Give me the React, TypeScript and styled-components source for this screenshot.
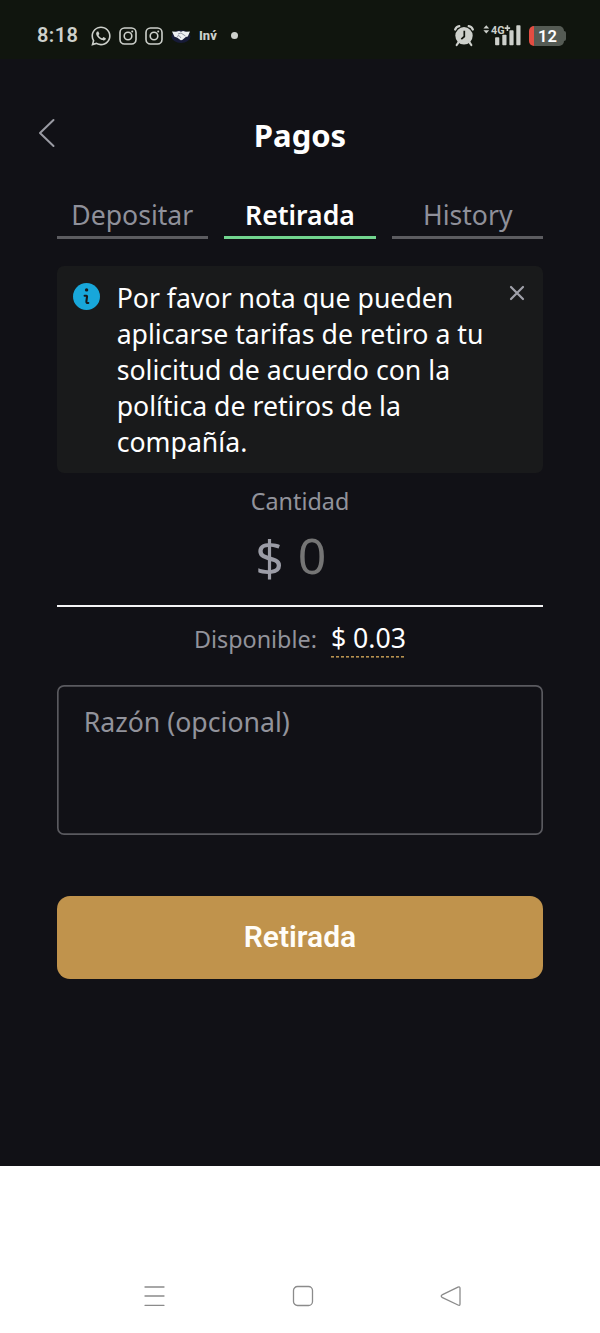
import React from "react";
import styled, { createGlobalStyle } from "styled-components";
import { FaWhatsapp } from "react-icons/fa";

const GlobalStyle = createGlobalStyle`
  * { box-sizing: border-box; }
  body { margin: 0; background: #fff; font-family: "Noto Sans", sans-serif; }
  button, textarea, input { font: inherit; border: 0; margin: 0; padding: 0; background: none; }
  svg { display: block; flex: none; }
`;

const Phone = styled.div`
  width: 600px;
  height: 1333px;
  display: flex;
  flex-direction: column;
  background: #fff;
  overflow: hidden;
`;

const StatusBar = styled.header`
  height: 59px;
  flex: none;
  display: flex;
  align-items: flex-start;
  justify-content: space-between;
  padding: 22px 34px 0 37px;
  background: #10150e;
  color: #cdd0cb;
  font-family: Roboto, sans-serif;
`;

const StatusGroup = styled.div<{ $gap: number }>`
  display: flex;
  align-items: center;
  gap: ${(p) => p.$gap}px;
  height: 27px;
`;

const Clock = styled.span`
  width: 46px;
  font-size: 20px;
  font-weight: 600;
  line-height: 25px;
  margin-top: -1px;
  letter-spacing: 0.4px;
  white-space: nowrap;
`;

const IconSlot = styled.span`
  display: flex;
  justify-content: center;
  width: 20px;
`;

const AppLabel = styled.span`
  font-size: 13px;
  font-weight: 800;
  line-height: 20px;
  width: 20px;
`;

const Dot = styled.span`
  width: 7px;
  height: 7px;
  margin-left: 4px;
  border-radius: 50%;
  background: #cdd0cb;
`;

const Battery = styled.div`
  display: flex;
  align-items: center;
`;

const BatteryBody = styled.div`
  width: 35px;
  height: 20px;
  border-radius: 5px;
  background: linear-gradient(90deg, #e24d42 0 5px, #555b54 5px);
  color: #fff;
  font-size: 16.5px;
  font-weight: 600;
  line-height: 22px;
  text-align: center;
  padding-left: 2px;
`;

const BatteryTip = styled.span`
  width: 2px;
  height: 10px;
  border-radius: 0 2px 2px 0;
  background: #555b54;
`;

const Screen = styled.main`
  height: 1107px;
  flex: none;
  display: flex;
  flex-direction: column;
  padding: 54px 56.67px 0;
  background: #111116;
`;

const TitleRow = styled.div`
  display: grid;
  grid-template-columns: 40px 1fr 40px;
  height: 84px;
  margin: 0 -18.67px;
`;

const BackButton = styled.button`
  align-self: start;
  padding-top: 5px;
  color: #9a9ba3;
`;

const Title = styled.h1`
  margin: 0;
  padding-top: 2px;
  text-align: center;
  color: #fff;
  font-size: 31px;
  font-weight: 700;
  line-height: 40px;
`;

const Tabs = styled.nav`
  display: grid;
  grid-template-columns: repeat(3, 1fr);
  gap: 16.5px;
  height: 42px;
  margin-bottom: 27px;
`;

const Tab = styled.button<{ $active?: boolean }>`
  && { padding-bottom: 4px; }
  border-bottom: 3px solid ${(p) => (p.$active ? "#72d58f" : "#5c5c60")};
  color: ${(p) => (p.$active ? "#fff" : "#8f909a")};
  font-size: 26.6px;
  font-weight: ${(p) => (p.$active ? 600 : 400)};
  line-height: 34px;
  text-align: center;
`;

const Notice = styled.section`
  display: flex;
  height: 207px;
  padding: 14px 17px 0 16.3px;
  border-radius: 7px;
  background: #191a1b;
`;

const NoticeIcon = styled.div`
  padding-top: 3px;
`;

const NoticeText = styled.p`
  flex: 1;
  margin: 0 0 0 16.7px;
  color: #fff;
  font-size: 26.67px;
  line-height: 36px;
`;

const CloseButton = styled.button`
  align-self: flex-start;
  padding-top: 5px;
  color: #a0a1aa;
`;

const AmountLabel = styled.label`
  margin-top: 12px;
  color: #92939b;
  font-size: 23.33px;
  line-height: 32px;
  text-align: center;
`;

const AmountRow = styled.div`
  display: flex;
  gap: 14px;
  height: 90px;
  padding: 1px 0 0 198.5px;
  border-bottom: 2px solid #f4f4f5;
  font-size: 50px;
  line-height: 74px;
`;

const Currency = styled.span`
  padding-top: 2px;
  color: #9b9ca6;
`;

const AmountValue = styled.span`
  color: #757575;
`;

const Available = styled.div`
  display: flex;
  justify-content: center;
  gap: 14px;
  height: 78px;
  padding-top: 13px;
  color: #92939b;
  font-size: 23.33px;
  line-height: 38px;
`;

const AvailableValue = styled.span`
  align-self: flex-start;
  height: 38px;
  background: repeating-linear-gradient(90deg, #b8924f 0 3px, transparent 3px 5px) 0 100% / 100% 1.6px no-repeat;
  color: #fff;
  font-size: 26.67px;
  line-height: 36px;
`;

const Reason = styled.textarea`
  && {
    display: block;
    width: 100%;
    height: 150px;
    padding: 18px 27px;
    border-radius: 7px;
  }
  box-shadow: inset 0 0 0 1.67px #5a5a5f;
  resize: none;
  outline: none;
  color: #fff;
  font-size: 26.67px;
  line-height: 37px;
  &::placeholder { color: #92939b; opacity: 1; }
`;

const Submit = styled.button`
  && {
    height: 83px;
    margin-top: 61.4px;
    padding-bottom: 2px;
    background: #c0934c;
    font: 600 30px/80px Roboto, sans-serif;
  }
  border-radius: 13px;
  color: #fffdf8;
`;

const NavBar = styled.footer`
  display: flex;
  justify-content: space-between;
  padding: 119px 138px 0 143px;
`;

const Instagram = () => (
  <svg width="18" height="18" viewBox="0 0 18 18" fill="none" stroke="currentColor" strokeWidth="1.6">
    <rect x="1" y="1" width="16" height="16" rx="4.5" />
    <circle cx="9" cy="9" r="3.8" />
    <circle cx="13.2" cy="4.6" r="1" fill="currentColor" stroke="none" />
  </svg>
);

const Handshake = () => (
  <svg width="20" height="18" viewBox="0 0 20 18">
    <ellipse cx="10" cy="9.5" rx="9.5" ry="6.5" fill="#171b38" />
    <path d="M1 4.500l4 .2 3-.8 2 .8 2-.8 3 .8 4-.2-2.200 5-2 .5-3.600 3-1.400.2-3.800-2.800-2.500-.7z" fill="#eef0f4" />
    <path d="M7 7l3-1 4.500 3M6 9.500l2-1 2 2.500" fill="none" stroke="#6d7183" strokeWidth=".7" />
  </svg>
);

const Alarm = () => (
  <svg width="20" height="22" viewBox="0 1.200 20 22">
    <circle cx="10" cy="12" r="8.700" fill="currentColor" />
    <path d="M1.200 5.700Q2.300 2.800 5.300 2.300M18.800 5.700Q17.700 2.800 14.700 2.300" fill="none" stroke="currentColor" strokeWidth="2.200" strokeLinecap="round" />
    <path d="M4.500 18.500l-1.800 2.700M15.500 18.500l1.800 2.700" stroke="currentColor" strokeWidth="2.200" strokeLinecap="round" />
    <path d="M10.300 7v5.700l-3 2.600" fill="none" stroke="#10150e" strokeWidth="1.700" />
  </svg>
);

const Signal = () => (
  <svg width="38" height="22" viewBox="0.400 1.200 38 22" fill="currentColor">
    <path d="M.8 4.800L3.700 1.500l2.900 3.300zM.8 6.500L3.700 9.800l2.900-3.300z" />
    <text x="8.500" y="10" fontFamily="Roboto, sans-serif" fontSize="10.800" fontWeight="700">4G</text>
    <path d="M22 3.500h5.500v1.600h-5.500zM24 1.500h1.600v5.600h-1.600z" />
    <rect x="12.500" y="13.500" width="4.200" height="8" rx=".8" />
    <rect x="19.700" y="11" width="4.200" height="10.500" rx=".8" />
    <rect x="26.800" y="6.500" width="4.200" height="15" rx=".8" />
    <rect x="33.700" y="1.500" width="4.200" height="20" rx=".8" />
  </svg>
);

const InfoIcon = () => (
  <svg width="27" height="27" viewBox="0 0 27 27">
    <circle cx="13.500" cy="13.500" r="13.500" fill="#18a7da" />
    <circle cx="13.600" cy="6.900" r="1.700" fill="#17191b" />
    <path d="M11.600 12.700h1.700q.9 0 .7 1.100l-.6 4.500q-.3 2 1.900 1.700" fill="none" stroke="#17191b" strokeWidth="2.100" strokeLinecap="round" />
  </svg>
);

export default function App() {
  return (
    <Phone>
      <GlobalStyle />
      <StatusBar>
        <StatusGroup $gap={8}>
          <Clock>8:18</Clock>
          <IconSlot><FaWhatsapp size={22} /></IconSlot>
          <Instagram />
          <Instagram />
          <Handshake />
          <AppLabel>Inv́</AppLabel>
          <Dot />
        </StatusGroup>
        <StatusGroup $gap={8.5}>
          <Alarm />
          <Signal />
          <Battery>
            <BatteryBody>12</BatteryBody>
            <BatteryTip />
          </Battery>
        </StatusGroup>
      </StatusBar>
      <Screen>
        <TitleRow>
          <BackButton aria-label="Volver">
            <svg width="18" height="30" viewBox="0 0 18 30" fill="none" stroke="currentColor" strokeWidth="2" strokeLinecap="round" strokeLinejoin="round">
              <path d="M15.500 2L2 15l13.500 13" />
            </svg>
          </BackButton>
          <Title>Pagos</Title>
        </TitleRow>
        <Tabs>
          <Tab>Depositar</Tab>
          <Tab $active>Retirada</Tab>
          <Tab>History</Tab>
        </Tabs>
        <Notice>
          <NoticeIcon><InfoIcon /></NoticeIcon>
          <NoticeText>
            Por favor nota que pueden<br />aplicarse tarifas de retiro a tu<br />solicitud de acuerdo con la<br />política de retiros de la<br />compañía.
          </NoticeText>
          <CloseButton aria-label="Cerrar">
            <svg width="18" height="16" viewBox="0 0 18 16" fill="none" stroke="currentColor" strokeWidth="2.200" strokeLinecap="round">
              <path d="M3 2l12 12M15 2L3 14" />
            </svg>
          </CloseButton>
        </Notice>
        <AmountLabel>Cantidad</AmountLabel>
        <AmountRow>
          <Currency>$</Currency>
          <AmountValue>0</AmountValue>
        </AmountRow>
        <Available>
          <span>Disponible:</span>
          <AvailableValue>$ 0.03</AvailableValue>
        </Available>
        <Reason placeholder="Razón (opcional)" />
        <Submit>Retirada</Submit>
      </Screen>
      <NavBar>
        <svg width="22" height="22" viewBox="0 0 22 22" stroke="#8b8b8b" strokeWidth="1.300" strokeLinecap="round">
          <path d="M2 2h19M2 11h19M2 20.300h19" />
        </svg>
        <svg width="22" height="22" viewBox="0 0 22 22" fill="none" stroke="#8b8b8b" strokeWidth="1.300">
          <rect x="1.500" y="1.500" width="19" height="19" rx="4" />
        </svg>
        <svg width="22" height="22" viewBox="0 0 22 22" fill="none" stroke="#8b8b8b" strokeWidth="1.300" strokeLinejoin="round">
          <path d="M2 9.900L18 2.100Q20 1.300 20 3.300V18.900Q20 21 18 20L2 12.300Q.5 11.100 2 9.900z" />
        </svg>
      </NavBar>
    </Phone>
  );
}
